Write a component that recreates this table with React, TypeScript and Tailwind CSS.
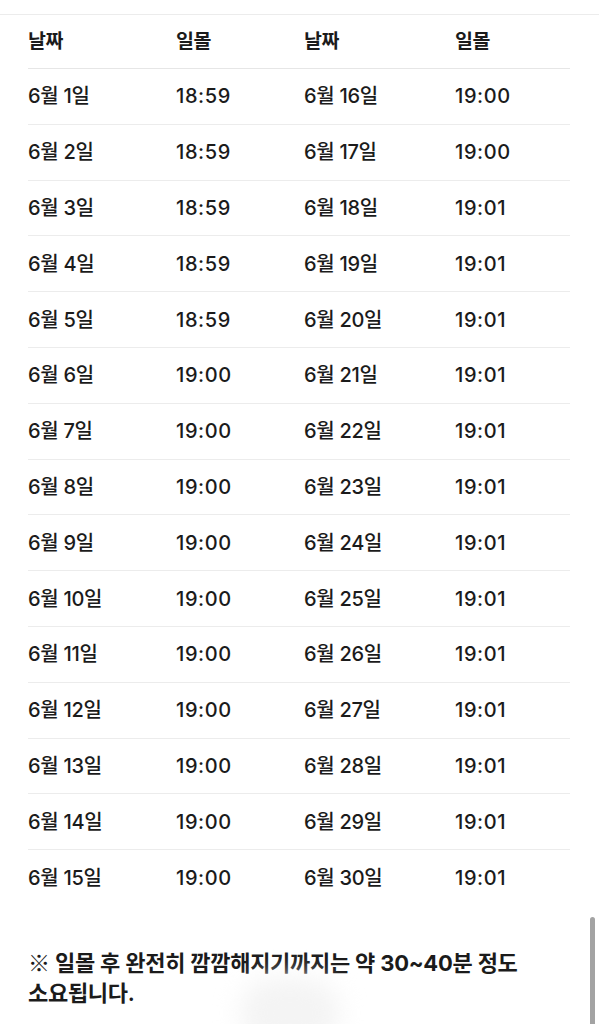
import React from "react";

const left = [
  ["6월 1일", "18:59"],
  ["6월 2일", "18:59"],
  ["6월 3일", "18:59"],
  ["6월 4일", "18:59"],
  ["6월 5일", "18:59"],
  ["6월 6일", "19:00"],
  ["6월 7일", "19:00"],
  ["6월 8일", "19:00"],
  ["6월 9일", "19:00"],
  ["6월 10일", "19:00"],
  ["6월 11일", "19:00"],
  ["6월 12일", "19:00"],
  ["6월 13일", "19:00"],
  ["6월 14일", "19:00"],
  ["6월 15일", "19:00"],
];
const right = [
  ["6월 16일", "19:00"],
  ["6월 17일", "19:00"],
  ["6월 18일", "19:01"],
  ["6월 19일", "19:01"],
  ["6월 20일", "19:01"],
  ["6월 21일", "19:01"],
  ["6월 22일", "19:01"],
  ["6월 23일", "19:01"],
  ["6월 24일", "19:01"],
  ["6월 25일", "19:01"],
  ["6월 26일", "19:01"],
  ["6월 27일", "19:01"],
  ["6월 28일", "19:01"],
  ["6월 29일", "19:01"],
  ["6월 30일", "19:01"],
];

const font = { fontFamily: "Inter, 'Noto Sans CJK KR', sans-serif" };
const cjk = { fontFamily: "'Noto Sans CJK KR', sans-serif" };

export default function App() {
  return (
    <div
      className="relative w-[599px] h-[1024px] overflow-hidden bg-white text-[#1b1b1b]"
      style={font}
    >
      <div className="h-[14px]" />
      <div className="border-t border-[#ececec]">
        <div className="mx-[28px] w-[542px]">
          <div className="grid grid-cols-[148px_128px_151px_115px] h-[54px] items-center border-b border-[#e6e6e6] text-[19.5px] font-semibold tracking-[-0.4px]">
            <div>날짜</div>
            <div>일몰</div>
            <div>날짜</div>
            <div>일몰</div>
          </div>
          {left.map((l, i) => (
            <div
              key={i}
              className={`grid grid-cols-[148px_128px_151px_115px] items-center h-[55.8px] text-[20px] font-medium ${
                i < left.length - 1 ? "border-b border-[#ececec]" : ""
              }`}
            >
              <div className="tracking-[-0.3px]">{l[0]}</div>
              <div className="tracking-[0.6px]">{l[1]}</div>
              <div className="tracking-[-0.3px]">{right[i][0]}</div>
              <div className="tracking-[0.6px]">{right[i][1]}</div>
            </div>
          ))}
        </div>
      </div>
      <div className="px-[28px] pt-[40px] text-[22px] leading-[30px] font-semibold tracking-[-0.3px] text-[#1b1b1b]">
        <span style={cjk}>※</span> 일몰 후 완전히 깜깜해지기까지는 약{" "}
        <span className="font-bold">30~40</span>분 정도
        <br />
        소요됩니다.
      </div>
      <div className="absolute left-[240px] top-[978px] w-[100px] h-[70px] rounded-full bg-[#f4f4f4] blur-[12px]" />
      <div className="absolute left-[590px] top-[917px] w-[5px] h-[120px] rounded-full bg-[#a3a3a3]" />
    </div>
  );
}
